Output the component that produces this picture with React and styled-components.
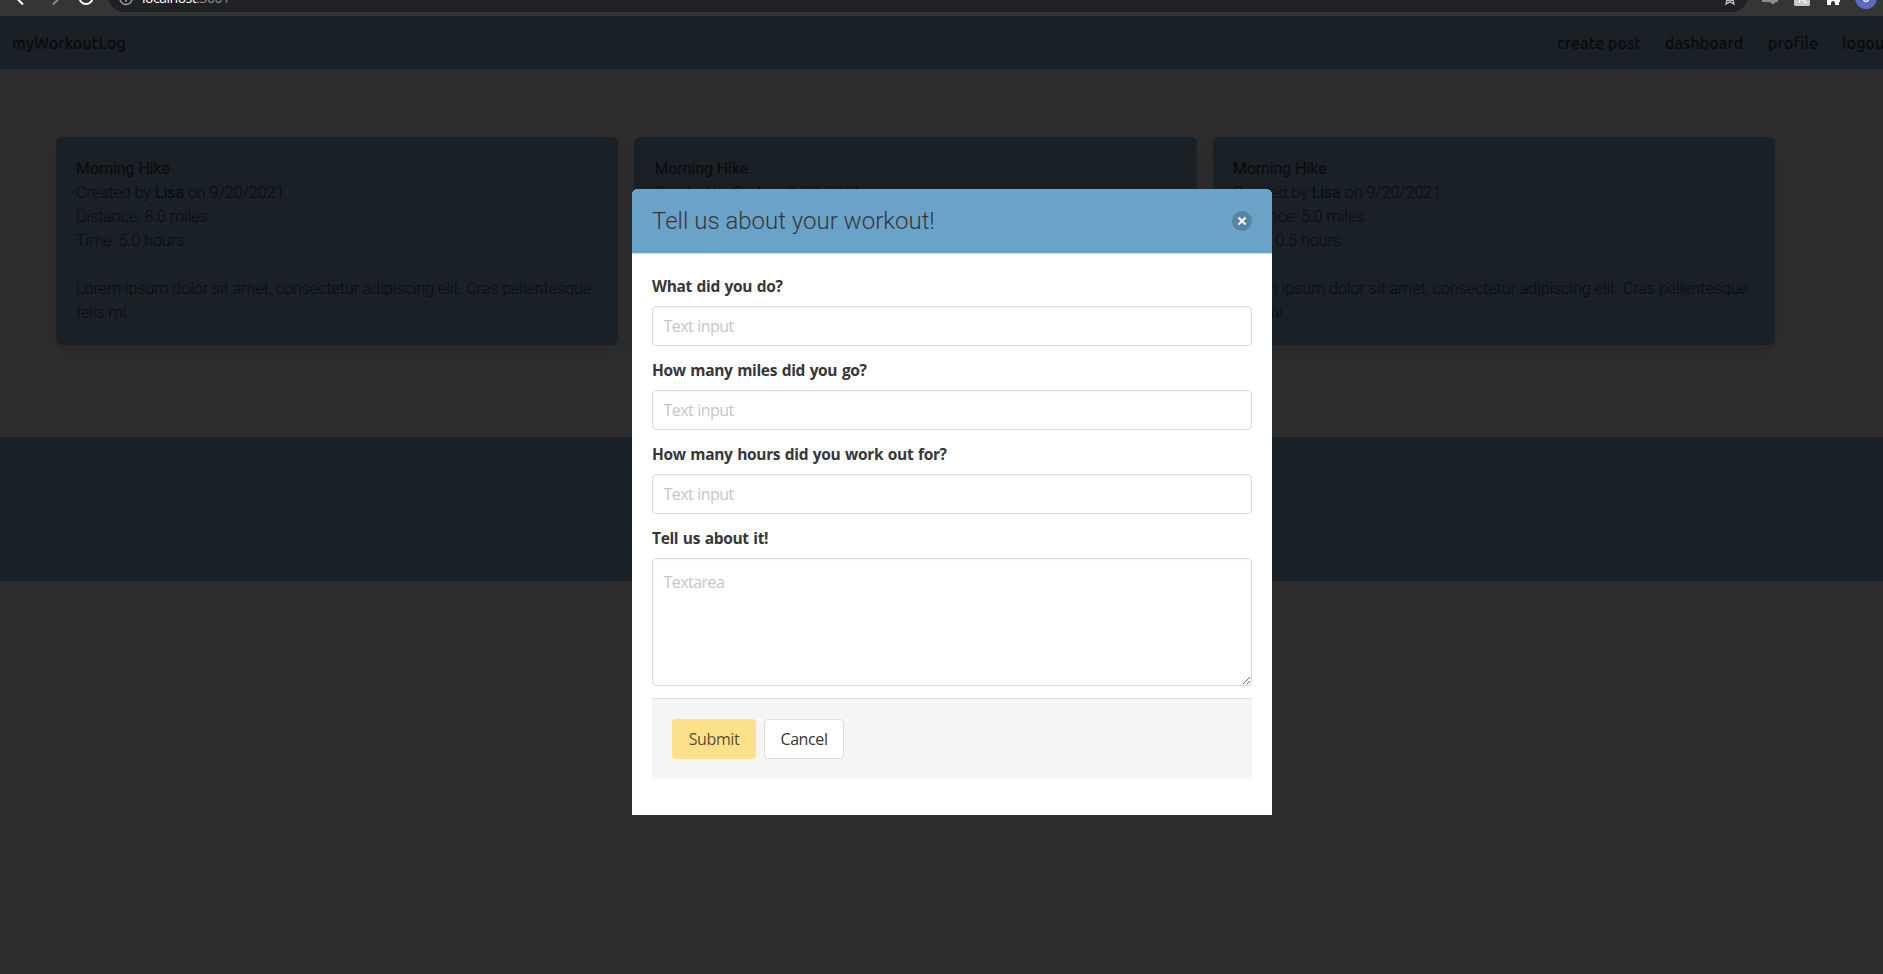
import React from "react";
import styled, { createGlobalStyle } from "styled-components";

const Global = createGlobalStyle`
  * { box-sizing: border-box; }
  html, body { margin: 0; padding: 0; height: 100%; overflow: hidden; }
  body { background: #2d2d2d; font-family: Roboto, sans-serif; font-size: 16px; line-height: 24px; }
`;
const Window = styled.div`
  position: relative; height: 974px; overflow: hidden; background: #2d2d2d;
`;
const Chrome = styled.div`
  height: 16px; background: #353535; display: flex; overflow: hidden;
  svg { display: block; }
`;
const Nav = styled.nav`
  height: 53px; width: 1903px; background: #192026; color: #090a0b;
  display: flex; align-items: center; justify-content: space-between;
  padding: 1px 12px 0; font: 500 16px/24px Ubuntu, "Noto Sans", sans-serif;
`;
const NavLinks = styled.div`display: flex;`;
const NavItem = styled.a`
  width: ${(p) => (p.$w ? `${p.$w}px` : "auto")}; white-space: nowrap; letter-spacing: .1px;
`;
const Cards = styled.main`
  display: grid; grid-template-columns: repeat(3, 562.2px); column-gap: 16.2px;
  padding: 68px 0 92px 56px;
`;
const Card = styled.article`
  height: 208px; padding: 20px; border-radius: 6px; background: #192026; color: #090b0c;
  font-weight: 300; letter-spacing: -.01px; box-shadow: 0 8px 16px -2px rgba(10,10,10,.1);
  p { margin: 0; }
  strong { font-weight: 400; letter-spacing: -.08px; }
`;
const Body = styled.p`&& { margin-top: 24px; }`;
const Band = styled.footer`height: 144px; background: #192026;`;
const Modal = styled.section`
  position: absolute; left: 632px; top: 189px; width: 640px; height: 626px;
  background: #fff; border-radius: 6px 6px 0 0; overflow: hidden; color: #363636;
`;
const ModalHead = styled.header`
  height: 65px; padding: 0 20px; background: #6ba3c8; border-bottom: 1px solid #dbdbdb;
  display: flex; align-items: center; justify-content: space-between;
`;
const Title = styled.h1`
  margin: 0; font: 300 24px/24px Roboto, sans-serif;
`;
const Close = styled.button`
  width: 20px; height: 20px; border: 0; padding: 0; border-radius: 50%;
  background: rgba(10,10,10,.2); display: block;
  svg { display: block; }
`;
const Form = styled.form`
  padding: 20px;
`;
const Field = styled.div`margin-bottom: 12px;`;
const Label = styled.label`
  display: block; height: 24px; margin-bottom: 8px;
  font: 700 15.5px/25px "Open Sans", "Noto Sans", sans-serif;
  letter-spacing: -.35px; word-spacing: 1px;
`;
const Input = styled.input`
  display: block; width: 100%; height: 40px; padding: 7px 11px 7px 10.5px; border: 1px solid #dbdbdb;
  border-radius: 4px; box-shadow: inset 0 1px 2px rgba(10,10,10,.05); background: #fff;
  font: 400 16px/24px "Open Sans", "Noto Sans", sans-serif; letter-spacing: -.55px; word-spacing: .5px;
  &::placeholder { color: #c6c6c6; opacity: 1; }
`;
const Area = styled(Input)`
  height: 128px; padding: 11px 11px 11px 10.5px; resize: vertical;
`;
const Actions = styled.div`
  height: 81px; padding: 20px; display: flex; gap: 8px; background: #f5f5f5;
  border-top: 1px solid #dbdbdb; border-radius: 0 0 6px 6px;
`;
const Button = styled.button`
  width: ${(p) => p.$w}px; height: 40px; padding: 0; border-radius: 4px;
  border: 1px solid ${(p) => (p.$primary ? "transparent" : "#dbdbdb")};
  background: ${(p) => (p.$primary ? "#ffe08a" : "#fff")};
  color: ${(p) => (p.$primary ? "rgba(0,0,0,.7)" : "#363636")};
  font: 400 16px/24px "Open Sans", "Noto Sans", sans-serif; letter-spacing: -.4px;
`;

const workouts = [
  { who: "Lisa", date: "9/20/2021", miles: "8.0", hours: "5.0" },
  { who: "Carl", date: "9/20/2021", miles: "5.0", hours: "1.0" },
  { who: "Lisa", date: "9/20/2021", miles: "5.0", hours: "0.5" },
];
const questions = [
  "What did you do?",
  "How many miles did you go?",
  "How many hours did you work out for?",
];

export default function App() {
  return (
    <Window>
      <Global />
      <Chrome>
        <svg width="1883" height="16" fill="none">
          <rect x="108" y="-20" width="1640" height="32" rx="16" fill="#202124" />
          <path d="M23 4.500L16.500 -2" stroke="#fff" strokeWidth="2" />
          <path d="M53 4.500L59.500 -2" stroke="#8a8a8a" strokeWidth="2" />
          <circle cx="86" cy="-2.500" r="6.500" stroke="#fff" strokeWidth="2" />
          <circle cx="126" cy="-1.500" r="6" stroke="#9aa0a6" strokeWidth="1.500" />
          <path d="M126 -3V2" stroke="#9aa0a6" strokeWidth="1.500" />
          <text x="142" y="3" fontFamily="Open Sans, sans-serif" fontSize="14" textLength="88" fill="#fff">localhost<tspan fill="#8d9195">:3001</tspan></text>
          <path d="M1726 4l1-4 3 1 3-1 1 4-4-2z" stroke="#c4c4c4" strokeWidth="1.300" />
          <path d="M1762 0h6v2h-6zM1768 0h10v2h-2l-3 2.500-3-2.500h-2z" fill="#8d8d8d" />
          <rect x="1794" y="-10" width="16" height="16" rx="1.500" fill="#c8c8c8" />
          <path d="M1799.500 3V-1M1799 0h5M1804.500 -1v3.500h2.500" stroke="#fff" />
          <path d="M1827 -4h12v3h1v3h-1v3h-4v-2a2 2 0 0 0-4 0v2h-4z" fill="#fff" />
          <circle cx="1866" cy="-2" r="11" fill="#5c6bc0" />
          <circle cx="1866" cy="-1" r="2.500" stroke="#fff" strokeWidth="1.300" />
        </svg>
      </Chrome>
      <Nav>
        <NavItem>myWorkoutLog</NavItem>
        <NavLinks>
          <NavItem $w={108}>create post</NavItem>
          <NavItem $w={103}>dashboard</NavItem>
          <NavItem $w={74}>profile</NavItem>
          <NavItem $w={49}>logout</NavItem>
        </NavLinks>
      </Nav>
      <Cards>
        {workouts.map((w, i) => (
          <Card key={i}>
            <p><strong>Morning Hike</strong></p>
            <p>Created by <strong>{w.who}</strong> on {w.date}</p>
            <p>Distance: {w.miles} miles</p>
            <p>Time: {w.hours} hours</p>
            <Body>Lorem ipsum dolor sit amet, consectetur adipiscing elit. Cras pellentesque felis mi.</Body>
          </Card>
        ))}
      </Cards>
      <Band />
      <Modal>
        <ModalHead>
          <Title>Tell us about your workout!</Title>
          <Close aria-label="close">
            <svg width="20" height="20"><path d="M6.500 6.500l7 7M13.500 6.500l-7 7" stroke="#fff" strokeWidth="2" /></svg>
          </Close>
        </ModalHead>
        <Form>
          {questions.map((q) => (
            <Field key={q}>
              <Label>{q}</Label>
              <Input placeholder="Text input" />
            </Field>
          ))}
          <Field>
            <Label>Tell us about it!</Label>
            <Area as="textarea" placeholder="Textarea" />
          </Field>
          <Actions>
            <Button type="button" $primary $w={84}>Submit</Button>
            <Button type="button" $w={80}>Cancel</Button>
          </Actions>
        </Form>
      </Modal>
    </Window>
  );
}
